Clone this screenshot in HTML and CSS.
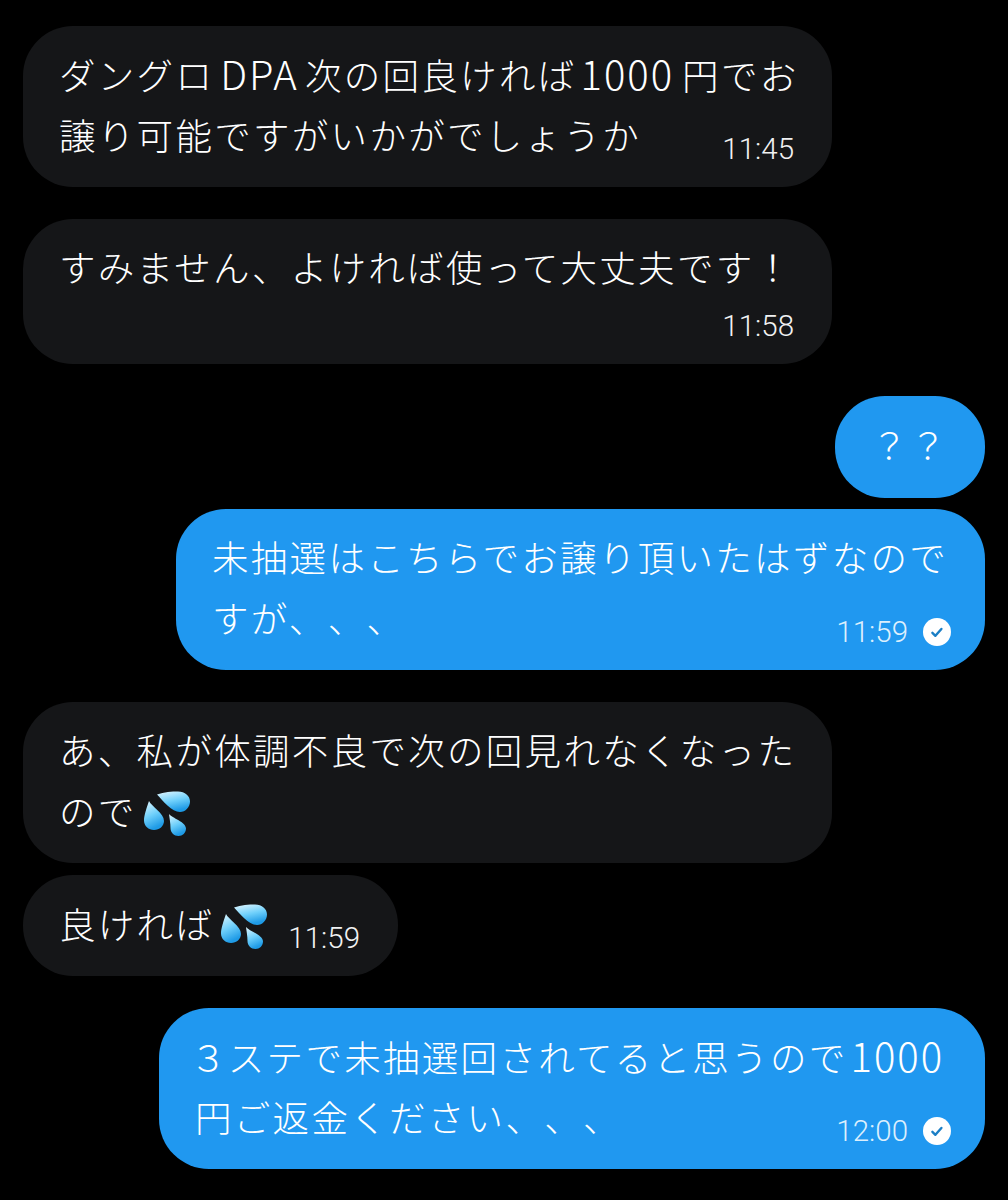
FILE: index.html
```html
<!DOCTYPE html>
<html lang="ja">
<head>
<meta charset="UTF-8">
<title>DM</title>
<link rel="stylesheet" href="styles.css">
</head>
<body>

<div class="chat">
  <div class="bubble in wide">
    <div class="line">ダングロ<span class="lat pad">DPA</span>次の回良ければ<span class="lat price">1000</span>円でお</div>
    <div class="line last">
      <span>譲り可能ですがいかがでしょうか</span>
      <span class="time">11:45</span>
    </div>
  </div>

  <div class="bubble in wide">
    <div class="line">すみません、よければ使って大丈夫です！</div>
    <div class="meta-row"><span class="time">11:58</span></div>
  </div>

  <div class="group">
    <div class="bubble out single pair">
      <div class="line">？？</div>
    </div>
    <div class="bubble out wide">
      <div class="line">未抽選はこちらでお譲り頂いたはずなので</div>
      <div class="line last">
        <span>すが、、、</span>
        <span class="stamp">
          <span class="time">11:59</span>
          <svg class="tick" viewBox="0 0 28 28"><circle cx="14" cy="14" r="14" fill="#fff"/><path d="M9.4 14.800l3 3 6-6.800" fill="none" stroke="#1c7fc5" stroke-width="2.400" stroke-linecap="round" stroke-linejoin="round"/></svg>
        </span>
      </div>
    </div>
  </div>

  <div class="group">
    <div class="bubble in wide">
      <div class="line">あ、私が体調不良で次の回見れなくなった</div>
      <div class="line last">
        <span class="with-emoji">ので<svg class="sweat" viewBox="0 0 48 46">
          <defs>
            <linearGradient id="drop" x1="0" y1="0" x2="0.35" y2="1">
              <stop offset="0" stop-color="#e4f8ff"/>
              <stop offset="0.55" stop-color="#6fd0fb"/>
              <stop offset="1" stop-color="#1f9be6"/>
            </linearGradient>
          </defs>
          <path fill="url(#drop)" d="M15 3.500C22 1 30 .5 36 .5c7 0 12 4.500 12 10 0 5.500-4.500 10.500-10 10.500C30 21 21 10 15 3.500z"/>
          <path fill="url(#drop)" d="M7 10c2 5 15 12 15 20 0 5-4.500 9-10 9S2 35 2 29.500C2 24 5 16 7 10z"/>
          <path fill="url(#drop)" d="M27 23c3 4 17 8 17 14.500 0 4.500-3.500 7.500-7.500 7.500-4.500 0-8-3.500-8-8 0-5-1-10-1.500-14z"/>
        </svg></span>
      </div>
    </div>
    <div class="bubble in single short">
      <div class="line last">
        <span class="with-emoji">良ければ<svg class="sweat" viewBox="0 0 48 46">
          <path fill="url(#drop)" d="M15 3.500C22 1 30 .5 36 .5c7 0 12 4.500 12 10 0 5.500-4.500 10.500-10 10.500C30 21 21 10 15 3.500z"/>
          <path fill="url(#drop)" d="M7 10c2 5 15 12 15 20 0 5-4.500 9-10 9S2 35 2 29.500C2 24 5 16 7 10z"/>
          <path fill="url(#drop)" d="M27 23c3 4 17 8 17 14.500 0 4.500-3.500 7.500-7.500 7.500-4.500 0-8-3.500-8-8 0-5-1-10-1.500-14z"/>
        </svg></span>
        <span class="time">11:59</span>
      </div>
    </div>
  </div>

  <div class="bubble out widest">
    <div class="line"><span class="num">３</span>ステで未抽選回されてると思うので<span class="lat">1000</span></div>
    <div class="line last">
      <span>円ご返金ください、、、</span>
      <span class="stamp">
        <span class="time">12:00</span>
        <svg class="tick" viewBox="0 0 28 28"><circle cx="14" cy="14" r="14" fill="#fff"/><path d="M9.4 14.800l3 3 6-6.800" fill="none" stroke="#1c7fc5" stroke-width="2.400" stroke-linecap="round" stroke-linejoin="round"/></svg>
      </span>
    </div>
  </div>
</div>

</body>
</html>
```

FILE: styles.css
```css
body {
  margin: 0;
  background: #000;
  font-family: "Noto Sans CJK JP", "Noto Sans", sans-serif;
}

.chat {
  display: flex;
  flex-direction: column;
  gap: 32px;
  padding: 26px 23px 0;
}

.group {
  display: flex;
  flex-direction: column;
  gap: 11px;
}

.bubble {
  box-sizing: border-box;
  padding: 19px 37px 20px 36px;
  border-radius: 50px;
  color: #fff;
  font-size: 36.5px;
  font-weight: 300;
  letter-spacing: 2.3px;
  text-spacing-trim: space-all;
}

.in {
  align-self: flex-start;
  background: #151618;
}

.out {
  align-self: flex-end;
  background: #2098f0;
}

.wide {
  width: 809px;
}

.widest {
  width: 826px;
}

.single {
  height: 102px;
  padding-top: 20px;
}

.pair {
  width: 150px;
}

.short {
  width: 375px;
  height: 101px;
  margin-top: 1px;
}

.line {
  box-sizing: border-box;
  height: 61px;
  padding-bottom: 4px;
  line-height: 57px;
  white-space: nowrap;
}

.last {
  display: flex;
  justify-content: space-between;
  align-items: flex-end;
}

.last > .time,
.last > .stamp {
  margin-bottom: -4px;
}

.lat {
  font-size: 40px;
  letter-spacing: 2px;
  margin-left: 3px;
}

.pad {
  margin: 0 6px 0 6px;
}

.price {
  margin: 0 8px 0 4px;
}

.num {
  margin: 0 -1px 0 -5px;
}

.meta-row {
  display: flex;
  justify-content: flex-end;
  align-items: flex-end;
  height: 45px;
}

.time {
  margin-right: 1px;
  font-family: Roboto, "Liberation Sans", sans-serif;
  font-size: 29.5px;
  font-weight: 300;
  line-height: 36px;
  letter-spacing: 0;
  color: #f0f1f2;
}

.out .time {
  color: #dceffd;
}

.stamp {
  display: flex;
  align-items: center;
  gap: 14px;
  margin-right: -3px;
}

.tick {
  width: 28px;
  height: 28px;
}

.with-emoji {
  display: inline-flex;
  align-items: center;
}

.sweat {
  width: 48px;
  height: 46px;
  margin: 7px 0 0 5px;
}
```
